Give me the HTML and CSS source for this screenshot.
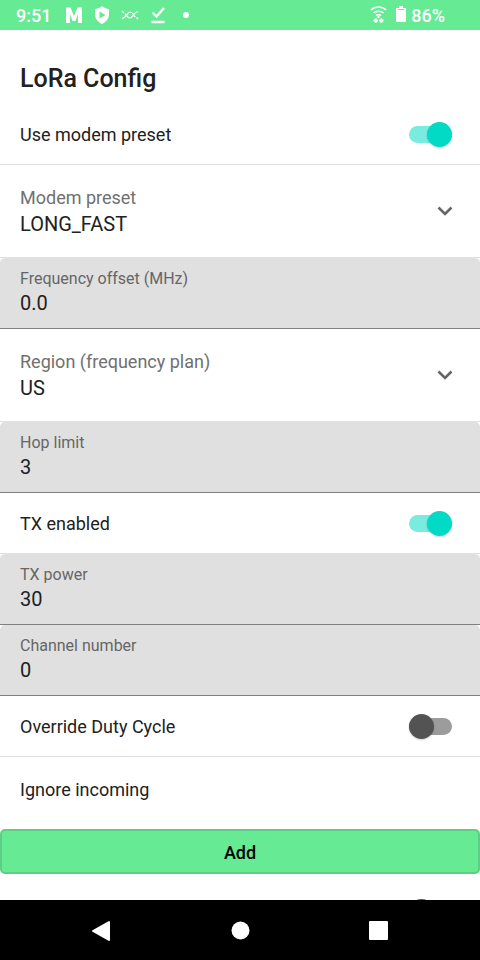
FILE: index.html
```html
<!DOCTYPE html>
<html lang="en">
<head>
<meta charset="utf-8">
<meta name="viewport" content="width=device-width, initial-scale=1">
<title>LoRa Config</title>
<link rel="stylesheet" href="styles.css">
</head>
<body>
<header class="status">
  <div class="status-group">
    <span class="clock">9:51</span>
    <svg class="icon" viewBox="0 0 18 18"><path fill="#fff" d="M1 1.500H5.500L9 10L12.500 1.500H17V17H13V8L10.500 15H7.500L5 8V17H1Z"/></svg>
    <svg class="icon" viewBox="0 0 18 18"><path fill="#fff" fill-rule="evenodd" d="M9 0C7 2 4 3 2 3V8C2 13 5 16 9 18C13 16 16 13 16 8V3C14 3 11 2 9 0ZM6.500 5.500L12.500 9L6.500 12.500Z"/></svg>
    <svg class="icon" viewBox="0 0 18 18" fill="none" stroke="#fff" stroke-width="1.200"><path d="M1 5L3 7M1 12.500C5 12.500 6 6 9.500 6C12 6 12.500 10 14.500 11M15.500 11.500L17 13M4 8C6 10 6.500 12 9 12C12 12 12.500 6 17 5.500"/></svg>
    <svg class="icon" viewBox="0 0 18 18" fill="none" stroke="#fff" stroke-width="2.400"><path d="M3.500 6.500L7.500 10.500L15 2M2.500 16H15.500"/></svg>
    <svg class="icon" viewBox="0 0 18 18"><circle cx="9" cy="9" r="3" fill="#fff"/></svg>
  </div>
  <div class="status-group status-right">
    <svg class="icon" viewBox="0 0 18 18" fill="none" stroke="#fff" stroke-width="1.500"><path d="M1 4C5 0 12 0 16 4M3.500 7C6 4.500 11 4.500 13.500 7M6 9.500C7 8.500 10 8.500 11 9.500"/><path d="M8.500 10V12M3.500 14.500H8M5.750 12.250V16.750M9 14.500H13.500M11.250 12.250V16.750" stroke-width="2"/></svg>
    <svg class="battery" viewBox="0 0 10 18"><path fill="#fff" fill-rule="evenodd" d="M3 0H7V2H10V16H0V2H3ZM2 3V4H8V3Z"/></svg>
    <span class="clock">86%</span>
  </div>
</header>

<main class="content">
  <h1 class="title">LoRa Config</h1>
  <label class="row"><span class="row-text">Use modem preset</span><input class="switch" type="checkbox" role="switch" checked></label>
  <div class="dropdown">
    <label class="dropdown-label" for="preset">Modem preset</label>
    <select class="value" id="preset"><option>LONG_FAST</option></select>
    <svg class="chevron" viewBox="0 0 16 10"><path d="M1.500 1.500L8 8L14.500 1.500" fill="none" stroke="#666" stroke-width="2.600"/></svg>
  </div>
  <div class="field">
    <label class="field-label" for="offset">Frequency offset (MHz)</label>
    <input class="value" id="offset" type="text" value="0.0">
  </div>
  <div class="dropdown">
    <label class="dropdown-label" for="region">Region (frequency plan)</label>
    <select class="value" id="region"><option>US</option></select>
    <svg class="chevron" viewBox="0 0 16 10"><path d="M1.500 1.500L8 8L14.500 1.500" fill="none" stroke="#666" stroke-width="2.600"/></svg>
  </div>
  <div class="field">
    <label class="field-label" for="hops">Hop limit</label>
    <input class="value" id="hops" type="text" value="3">
  </div>
  <label class="row"><span class="row-text">TX enabled</span><input class="switch" type="checkbox" role="switch" checked></label>
  <div class="field">
    <label class="field-label" for="power">TX power</label>
    <input class="value" id="power" type="text" value="30">
  </div>
  <div class="field">
    <label class="field-label" for="channel">Channel number</label>
    <input class="value" id="channel" type="text" value="0">
  </div>
  <label class="row"><span class="row-text">Override Duty Cycle</span><input class="switch" type="checkbox" role="switch"></label>
  <section class="incoming">
    <h2 class="subtitle">Ignore incoming</h2>
    <button class="add" type="button">Add</button>
  </section>
  <div class="row"><input class="switch" type="checkbox" role="switch" aria-label="Radio option"></div>
</main>

<nav class="navbar">
  <button class="nav-button" type="button" aria-label="Back"><svg class="nav-icon" viewBox="0 0 22 22"><path d="M3 11L19 2V20Z" fill="#fff" stroke="#fff" stroke-width="2" stroke-linejoin="round"/></svg></button>
  <button class="nav-button" type="button" aria-label="Home"><svg class="nav-icon" viewBox="0 0 22 22"><circle cx="11.500" cy="10.500" r="9" fill="#fff"/></svg></button>
  <button class="nav-button" type="button" aria-label="Recents"><svg class="nav-icon" viewBox="0 0 22 22"><rect x="1" y="1" width="19" height="19" rx="1" fill="#fff"/></svg></button>
</nav>
</body>
</html>
```

FILE: styles.css
```css
* {
  box-sizing: border-box;
}

body {
  margin: 0;
  height: 100vh;
  display: flex;
  flex-direction: column;
  background: #fff;
  color: #212121;
  font: 18px/24px Roboto, sans-serif;
}

.status {
  display: flex;
  flex: none;
  justify-content: space-between;
  align-items: center;
  height: 30px;
  padding: 0 35px 0 16px;
  background: #67ea94;
  color: #fff;
}

.status-group {
  display: flex;
  align-items: center;
  gap: 10px;
}

.status-right {
  gap: 8px;
}

.clock {
  padding-top: 2px;
  margin-right: 4px;
  font-weight: 500;
}

.status-right .clock {
  margin: 0 0 0 -3px;
}

.icon {
  width: 18px;
  height: 18px;
}

.battery {
  width: 10px;
  height: 18px;
}

.content {
  flex: 1;
  min-height: 0;
  overflow: hidden;
}

.title {
  margin: 0;
  padding: 33px 20px 9px;
  font-size: 25px;
  line-height: 32px;
  font-weight: 500;
}

.row {
  display: flex;
  align-items: center;
  justify-content: space-between;
  height: 61px;
  padding: 0 28px 0 20px;
  border-bottom: 1px solid #e0e0e0;
}

.row-text {
  padding-top: 2px;
}

.switch {
  appearance: none;
  position: relative;
  display: flex;
  align-items: center;
  width: 43px;
  height: 25px;
  margin: 0 0 0 auto;
}

.switch::before {
  content: "";
  position: absolute;
  inset: 4px 0;
  border-radius: 9px;
  background: #9c9c9c;
}

.switch::after {
  content: "";
  position: relative;
  width: 25px;
  height: 25px;
  border-radius: 50%;
  background: #535353;
  box-shadow: 0 1px 2px #0003;
}

.switch:checked::before {
  background: #79ecdf;
}

.switch:checked::after {
  margin-left: auto;
  background: #03dac5;
}

.dropdown {
  position: relative;
  display: flex;
  flex-direction: column;
  padding: 21px 0 19px;
  border-bottom: 1px solid #e0e0e0;
}

.dropdown-label {
  padding: 0 20px;
  color: #707070;
}

.value {
  appearance: none;
  display: block;
  width: 100%;
  height: 28px;
  margin: 0;
  padding: 0 20px;
  border: 0;
  background: none;
  color: #212121;
  font: 20px/28px Roboto, sans-serif;
}

.chevron {
  position: absolute;
  right: 27px;
  top: 41px;
  width: 16px;
  height: 10px;
  pointer-events: none;
}

.field {
  padding: 11px 0;
  border-bottom: 1px solid #808080;
  border-radius: 5px 5px 0 0;
  background: #e0e0e0;
}

.field-label {
  display: block;
  padding: 0 20px;
  color: #666;
  font-size: 16px;
  line-height: 20px;
}

.subtitle {
  margin: 0;
  padding: 21px 20px 27px;
  font-size: 18px;
  line-height: 24px;
  font-weight: 400;
}

.add {
  display: block;
  width: 100%;
  height: 45px;
  margin-bottom: 7px;
  padding: 2px 0 0;
  border: 2px solid #5dcf84;
  border-radius: 5px;
  background: #67ea94;
  color: #000;
  font: 500 18px/24px Roboto, sans-serif;
}

.navbar {
  display: flex;
  flex: none;
  justify-content: center;
  gap: 79px;
  height: 60px;
  padding-top: 2px;
  background: #000;
}

.nav-button {
  display: grid;
  place-items: center;
  width: 60px;
  padding: 0;
  border: 0;
  background: none;
}

.nav-icon {
  width: 22px;
  height: 22px;
}
```
